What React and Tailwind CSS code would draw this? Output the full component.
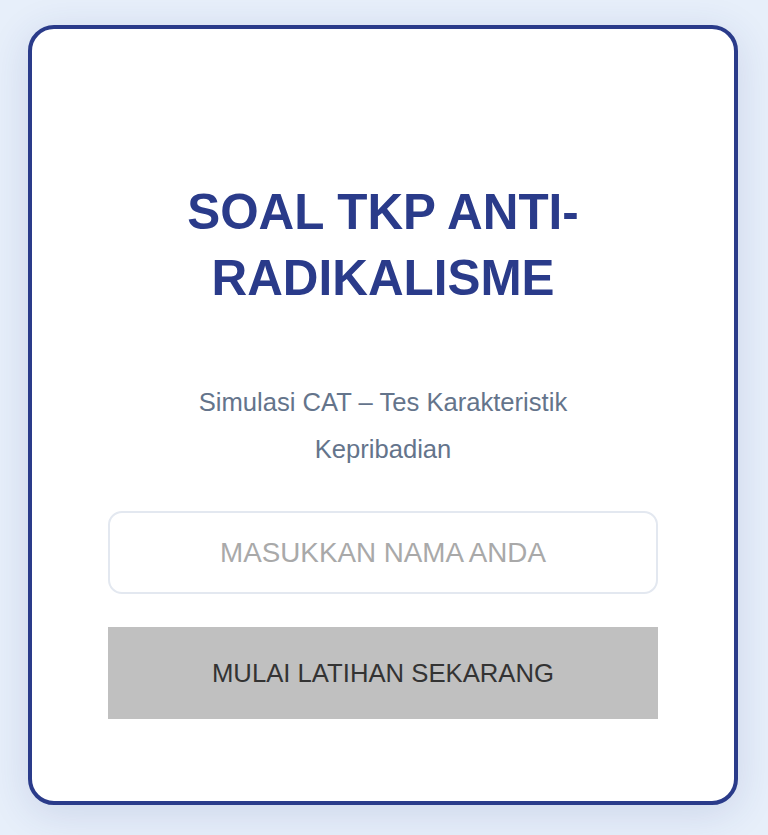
import React, { useState } from 'react';

export default function App() {
  const [name, setName] = useState('');

  return (
    <div className="min-h-screen bg-[#e7effa] pt-[25px] pb-[29px] pl-[28px] pr-[30px] font-['Liberation_Sans',Arial,sans-serif]">
      {/* Start card */}
      <div className="w-[710px] bg-white border-4 border-[#2a3b8a] rounded-[26px] shadow-[0_8px_40px_rgba(42,59,138,0.14)] pt-[150px] pb-[82px] px-[76px] flex flex-col items-center">
        <h1 className="text-[49.4px] leading-[66px] font-bold text-[#2a3b8a] text-center">
          SOAL TKP ANTI-RADIKALISME
        </h1>
        <p className="mt-[68px] max-w-[420px] text-center text-[25.6px] leading-[47px] text-[#64748b]">
          Simulasi CAT – Tes Karakteristik Kepribadian
        </p>
        <input
          type="text"
          value={name}
          onChange={e => setName(e.target.value)}
          placeholder="MASUKKAN NAMA ANDA"
          className="mt-[38px] w-full h-[83px] border-2 border-[#e3e8f0] rounded-[14px] text-center text-[27.8px] text-[#333] placeholder:text-[#a9a9a9] outline-none"
        />
        <button
          disabled={!name}
          className="mt-[33px] w-full h-[92px] bg-[#c0c0c0] text-[#333333] text-[25.7px]"
        >
          MULAI LATIHAN SEKARANG
        </button>
      </div>
    </div>
  );
}
